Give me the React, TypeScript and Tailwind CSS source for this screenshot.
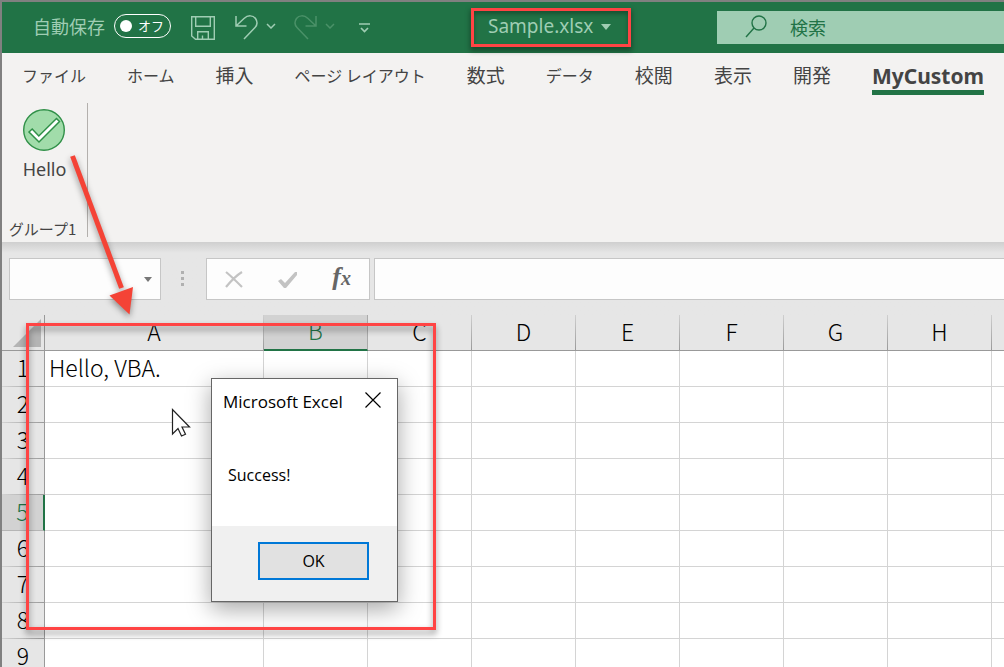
import React from "react";
import clsx from "clsx";

const tabs = [
  { label: "ファイル", size: "text-base" },
  { label: "ホーム", size: "text-base" },
  { label: "挿入", size: "text-[19px]" },
  { label: "ページ レイアウト", size: "text-base" },
  { label: "数式", size: "text-[19px]" },
  { label: "データ", size: "text-base" },
  { label: "校閲", size: "text-[19px]" },
  { label: "表示", size: "text-[19px]" },
  { label: "開発", size: "text-[19px]" },
];

const columns = ["A", "B", "C", "D", "E", "F", "G", "H"];
const rows = [1, 2, 3, 4, 5, 6, 7, 8, 9];

const SmallChevron = () => (
  <svg width="10" height="6" viewBox="0 0 10 6" fill="none" stroke="currentColor" strokeWidth="1.5">
    <path d="M1 1l4 4 4-4" />
  </svg>
);

const TitleBar = () => {
  return (
    <header className="flex h-[51px] items-center bg-[#217346] pb-1 text-[#9fcdb3]">
      <div className="flex shrink-0 items-center pl-[31px]">
        <span id="autosave" className="text-lg leading-6">自動保存</span>
        <button
          role="switch"
          aria-checked="false"
          aria-labelledby="autosave"
          className="ml-[9px] flex h-6 w-[57px] items-center justify-between rounded-full border border-white pr-1.5 pl-[5px] text-[13px] text-white"
        >
          <span className="size-3 rounded-full bg-white" />
          <span>オフ</span>
        </button>
        <button aria-label="上書き保存" className="ml-5 pt-1">
          <svg width="24" height="24" viewBox="0 0 24 24" fill="none" stroke="currentColor" strokeWidth="1.4">
            <path d="M.7.7h22.6v22.6H4.5L.7 20zM4.7.7v9.6h14.6V.7M6.7 23.3v-7.6h10.6v7.6M11.5 23v-3.6" />
          </svg>
        </button>
        <button aria-label="元に戻す" className="ml-5 pt-1">
          <svg width="23" height="25" viewBox="0 0 23 25" fill="none" stroke="currentColor" strokeWidth="1.5">
            <path d="M1 1v10h10.5M1 11L9 3.5C13-.2 18 .2 20.500 3.500c2 3 1.800 6.500-.5 9L9 24" />
          </svg>
        </button>
        <button aria-label="元に戻す履歴" className="ml-2">
          <SmallChevron />
        </button>
        <button aria-label="やり直し" className="ml-[18px] pt-1 text-[#4a9168]">
          <svg width="23" height="25" viewBox="0 0 23 25" fill="none" stroke="currentColor" strokeWidth="1.5">
            <path d="M22 1v10H11.500M22 11L14 3.500C10-.2 5 .2 2.500 3.500c-2 3-1.800 6.500.5 9L14 24" />
          </svg>
        </button>
        <button aria-label="やり直し履歴" className="ml-2 text-[#4a9168]">
          <SmallChevron />
        </button>
        <button aria-label="クイック アクセス ツール バー" className="ml-6 pt-1">
          <svg width="11" height="10" viewBox="0 0 11 10" fill="none" stroke="currentColor" strokeWidth="1.7">
            <path d="M0 1h11M2 5l3.500 3.500L9 5" />
          </svg>
        </button>
      </div>
      <button className="mt-1 ml-[101px] flex h-[39px] w-40 shrink-0 items-center gap-2 border-3 border-[#ff4444] pb-0.5 pl-3.5 font-['Noto_Sans'] text-[19px] shadow-[0_3px_5px_1px_rgba(0,0,0,0.35),inset_0_3px_4px_rgba(0,0,0,0.3)]">
        Sample.xlsx
        <svg width="10" height="6" viewBox="0 0 10 6" fill="currentColor">
          <path d="M0 0h10L5 6z" />
        </svg>
      </button>
      <label className="mt-1 ml-[86px] flex h-[33px] min-w-0 flex-1 items-center bg-[#9fcdb3] pb-0.5 pl-7 text-[#217346]">
        <svg className="shrink-0" width="23" height="23" viewBox="0 0 23 23" fill="none" stroke="currentColor" strokeWidth="1.4">
          <circle cx="14" cy="8" r="7" />
          <path d="M9 13L1 22" />
        </svg>
        <input
          aria-label="検索"
          placeholder="検索"
          className="ml-[22px] w-full min-w-0 bg-transparent text-lg leading-6 outline-none placeholder:text-[#217346]"
        />
      </label>
    </header>
  );
};

const Ribbon = () => {
  return (
    <section className="bg-[#f3f2f1] text-[#444444]">
      <nav className="flex h-11 items-start gap-[41px] overflow-hidden pl-5">
        {tabs.map((tab) => (
          <button key={tab.label} className={clsx("h-11 shrink-0 whitespace-nowrap", tab.size)}>
            {tab.label}
          </button>
        ))}
        <button className="h-[42px] shrink-0 border-b-[5px] border-[#217346] pt-2 font-['Noto_Sans'] text-[21px] leading-7 font-bold">
          MyCustom
        </button>
      </nav>
      <div className="flex h-[145px] pt-1.5">
        <div className="flex h-[134px] w-[86px] flex-col items-center justify-between border-r border-[#b3b0ad]">
          <button className="flex flex-col items-center gap-1 pt-1.5 font-['Noto_Sans'] text-lg">
            <svg width="42" height="42" viewBox="0 0 42 42">
              <circle cx="21" cy="21" r="20.300" fill="#a1dcaa" stroke="#309048" strokeWidth="1.4" />
              <path d="M6 23l3.200-3 6.600 7L33.500 9.500l3 3L16 33z" fill="#fff" stroke="#309048" strokeWidth="1.5" />
            </svg>
            <span className="leading-7">Hello</span>
          </button>
          <span className="pr-1 text-[15px] leading-4">グループ1</span>
        </div>
      </div>
    </section>
  );
};

const FormulaBar = () => {
  return (
    <section className="flex h-[73px] items-start bg-linear-to-b from-[#cfcfcf] via-[#e6e6e6] via-15% to-[#e6e6e6] pt-4 pl-[7px]">
      <div className="flex h-[42px] w-38 shrink-0 items-center border border-[#c6c6c6] bg-[#fdfdfd] pr-2">
        <input aria-label="名前ボックス" className="h-full min-w-0 flex-1 bg-transparent px-2 outline-none" />
        <button aria-label="名前の一覧">
          <svg width="8" height="5" viewBox="0 0 8 5" fill="#777">
            <path d="M0 0h8L4 5z" />
          </svg>
        </button>
      </div>
      <svg className="mt-[13px] ml-5 shrink-0" width="3" height="15" viewBox="0 0 3 15" fill="#b0b0b0">
        <path d="M0 0h3v3H0zM0 6h3v3H0zM0 12h3v3H0z" />
      </svg>
      <div className="ml-[22px] flex h-[42px] w-41 shrink-0 items-center justify-between border border-[#c6c6c6] bg-[#fdfdfd] px-[18px]">
        <button aria-label="キャンセル">
          <svg width="18" height="17" viewBox="0 0 18 17" fill="none" stroke="#c3c3c3" strokeWidth="2.2">
            <path d="M1 1c5 4 10 9 16 15M17 1C12 4 6 10 1 16" />
          </svg>
        </button>
        <button aria-label="入力">
          <svg width="19" height="17" viewBox="0 0 19 17" fill="#c3c3c3">
            <path d="M0 10l3-2 4 4L17 1l2 0v3L8 17H6z" />
          </svg>
        </button>
        <button
          aria-label="関数の挿入"
          className="flex items-baseline pb-1 font-['Liberation_Serif'] leading-8 font-bold text-[#666] italic"
        >
          <span className="text-[26px]">f</span>
          <span className="text-xl">x</span>
        </button>
      </div>
      <input
        aria-label="数式バー"
        className="ml-1 h-[42px] min-w-0 flex-1 border border-r-0 border-[#c6c6c6] bg-[#fdfdfd] px-2 outline-none"
      />
    </section>
  );
};

const Sheet = () => {
  return (
    <table className="w-full table-fixed border-separate border-spacing-0 bg-white text-[23px] leading-6 font-light text-black">
      <colgroup>
        <col className="w-[43px]" />
        {columns.map((c) => (
          <col key={c} className={c === "A" ? "w-[219px]" : "w-26"} />
        ))}
        <col />
      </colgroup>
      <thead>
        <tr className="h-9 bg-[#e6e6e6]">
          <td className="border-r border-b border-[#999] p-0">
            <svg className="mr-[3px] ml-auto" width="28" height="28" viewBox="0 0 28 28" fill="#b4b4b4">
              <path d="M28 0v28H0z" />
            </svg>
          </td>
          {columns.map((c) => (
            <th
              key={c}
              scope="col"
              className={clsx(
                "p-0 pb-1 font-light",
                c === "B"
                  ? "border-r border-b-2 border-r-[#aaa] border-b-[#217346] bg-[#d2d2d2] text-[#217346]"
                  : "border-r border-b [border-image:linear-gradient(to_bottom,#d0d0d0,#999)_1]"
              )}
            >
              {c}
            </th>
          ))}
          <td className="border-b border-[#999] p-0" />
        </tr>
      </thead>
      <tbody>
        {rows.map((r) => (
          <tr key={r} className="h-9">
            <th
              scope="row"
              className={clsx(
                "p-0 pb-1 font-light",
                r === 5
                  ? "border-r-2 border-b border-r-[#217346] border-b-[#b5b5b5] bg-[#d2d2d2] text-[#217346]"
                  : "border-r border-b bg-[#e6e6e6] [border-image:linear-gradient(to_right,#d4d4d4,#999)_1]"
              )}
            >
              {r}
            </th>
            {columns.map((c) => (
              <td key={c} className="border-r border-b border-[#d4d4d4] p-0 pb-1 pl-1 whitespace-nowrap">
                {r === 1 && c === "A" ? "Hello, VBA." : ""}
              </td>
            ))}
            <td className="border-b border-[#d4d4d4] p-0" />
          </tr>
        ))}
      </tbody>
    </table>
  );
};

const MessageBox = () => {
  return (
    <div
      role="dialog"
      aria-labelledby="msg-title"
      className="absolute top-[378px] left-[211px] flex w-[187px] flex-col border border-[#666] bg-white font-['Open_Sans'] text-base text-black shadow-[0_7px_22px_rgba(0,0,0,0.35)]"
    >
      <div className="flex h-[46px] items-center justify-between pr-4 pl-[11px]">
        <h2 id="msg-title" className="text-[17px] whitespace-nowrap">Microsoft Excel</h2>
        <button aria-label="閉じる" className="-mt-1">
          <svg width="16" height="16" viewBox="0 0 16 16" fill="none" stroke="#000" strokeWidth="1.2">
            <path d="M.5.5l15 15M15.5.5l-15 15" />
          </svg>
        </button>
      </div>
      <p className="h-[101px] px-4 pt-[38px]">Success!</p>
      <div className="flex h-[75px] items-start justify-end bg-[#f0f0f0] pt-4 pr-7">
        <button className="h-[38px] w-[111px] border-2 border-[#0078d7] bg-[#e1e1e1]">OK</button>
      </div>
    </div>
  );
};

// red frame, arrow and mouse pointer drawn over the sheet
const Annotations = () => {
  return (
    <div className="pointer-events-none">
      <div className="absolute top-[323px] left-[26px] h-[307px] w-[410px] border-3 border-[#ff4444] drop-shadow-[0_4px_3px_rgba(0,0,0,0.45)]" />
      <svg
        className="absolute top-[150px] left-[60px] drop-shadow-[0_3px_3px_rgba(0,0,0,0.4)]"
        width="90"
        height="170"
        viewBox="0 0 90 170"
      >
        <path d="M12.500 6L61.500 138" stroke="#f44336" strokeWidth="5" />
        <path d="M49.500 145.500L73 137l-3.500 27.500z" fill="#f44336" />
      </svg>
      <svg className="absolute top-[408px] left-[171px]" width="20" height="29" viewBox="0 0 20 29">
        <path
          d="M1.500 1.500v24.500l5.500-5.500 3.500 7.500 4-1.800-3.500-7.200h7.500z"
          fill="#fff"
          stroke="#222"
          strokeWidth="1.2"
        />
      </svg>
    </div>
  );
};

const App = () => {
  return (
    <div className="relative h-screen overflow-hidden border-t-2 border-l-2 border-[#808080] bg-white font-['Noto_Sans_CJK_JP',sans-serif]">
      <TitleBar />
      <Ribbon />
      <FormulaBar />
      <Sheet />
      <div className="absolute -top-0.5 -left-0.5">
        <MessageBox />
        <Annotations />
      </div>
    </div>
  );
};

export default App;
